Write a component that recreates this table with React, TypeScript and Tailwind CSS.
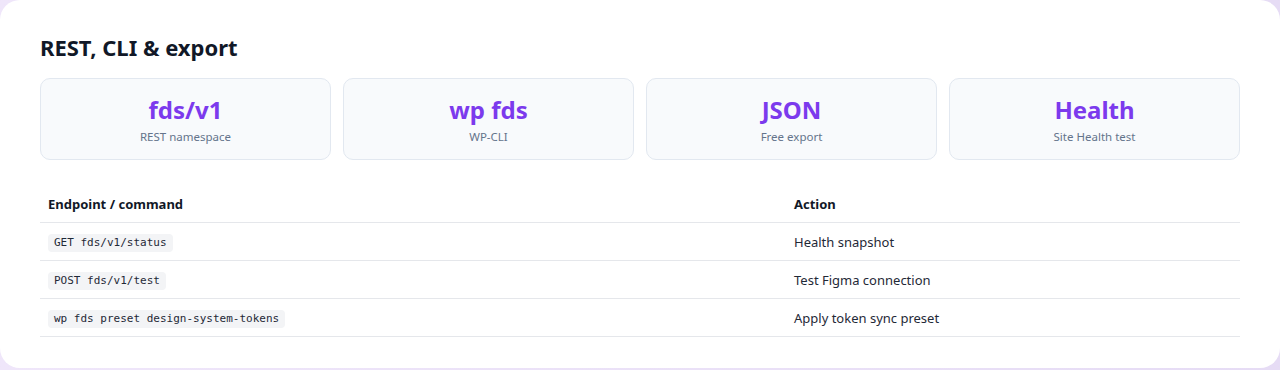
import React from "react";

const stats = [
  { v: "fds/v1", l: "REST namespace" },
  { v: "wp fds", l: "WP-CLI" },
  { v: "JSON", l: "Free export" },
  { v: "Health", l: "Site Health test" },
];

const rows = [
  { c: "GET fds/v1/status", a: "Health snapshot" },
  { c: "POST fds/v1/test", a: "Test Figma connection" },
  { c: "wp fds preset design-system-tokens", a: "Apply token sync preset" },
];

export default function App() {
  return (
    <div className="w-[1280px] h-[370px] bg-gradient-to-r from-[#efe6fa] to-[#e6dcf5] overflow-hidden" style={{ fontFamily: '"Noto Sans", "Open Sans", sans-serif' }}>
      <div className="h-[368px] bg-white rounded-[20px] px-10 pt-[32px]">
        <h2 className="text-[22px] leading-[30px] font-bold text-[#111827]">REST, CLI &amp; export</h2>
        <div className="grid grid-cols-4 gap-3 mt-[16px]">
          {stats.map((s) => (
            <div key={s.v} className="h-[82px] rounded-[10px] border border-[#e2e8f0] bg-[#f8fafc] flex flex-col items-center justify-center">
              <div className="text-[24px] leading-[30px] font-bold text-[#7c3aed] mt-[1px]">{s.v}</div>
              <div className="text-[11.5px] leading-[16px] text-[#64748b] mt-[4px]">{s.l}</div>
            </div>
          ))}
        </div>
        <table className="w-full mt-[25px] border-collapse text-[13px]">
          <thead>
            <tr className="border-b border-[#e5e7eb]">
              <th className="text-left font-bold text-[#111827] px-2 pt-[10px] pb-[9px] leading-[18px] w-[746px]">Endpoint / command</th>
              <th className="text-left font-bold text-[#111827] px-2 pt-[10px] pb-[9px] leading-[18px]">Action</th>
            </tr>
          </thead>
          <tbody>
            {rows.map((r) => (
              <tr key={r.c} className="border-b border-[#e5e7eb]">
                <td className="px-2 pt-[11px] pb-[8px] leading-[18px] align-top">
                  <code className="inline-block align-top bg-[#f3f4f6] rounded-[4px] px-[6px] text-[11px] leading-[18px] text-[#1f2937]" style={{ fontFamily: '"DejaVu Sans Mono", "Liberation Mono", monospace' }}>{r.c}</code>
                </td>
                <td className="px-2 pt-[10px] pb-[9px] leading-[18px] text-[#1f2937] align-top">{r.a}</td>
              </tr>
            ))}
          </tbody>
        </table>
      </div>
    </div>
  );
}
